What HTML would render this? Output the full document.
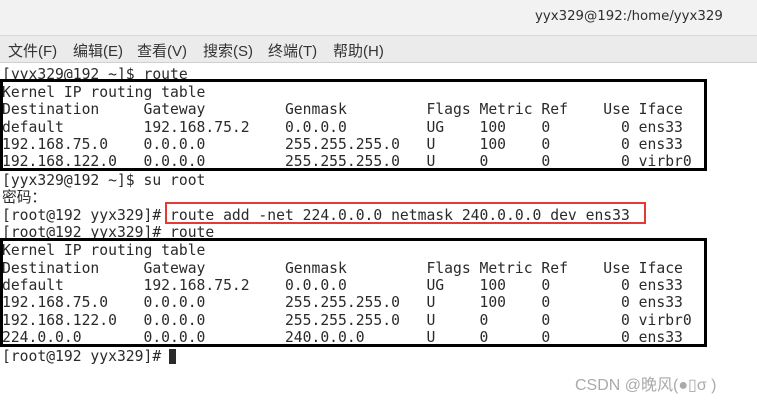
<!DOCTYPE html><html><head><meta charset="utf-8"><style>
body{margin:0;width:757px;height:402px;overflow:hidden;background:#fff;position:relative;font-family:"DejaVu Sans Mono","Liberation Mono","Noto Sans CJK SC",monospace;}
.title{position:absolute;left:0;top:0;width:757px;height:35px;background:#f2f2f2;border-bottom:1px solid #d8d8d8}
.title span{position:absolute;left:535px;top:9px;font:13.3px "DejaVu Sans","Liberation Sans",sans-serif;color:#2e2e2e}
.menu{position:absolute;left:0;top:36px;width:757px;height:26px;background:#ebebeb;border-bottom:1px solid #d0d0d0;font:15px "Liberation Sans","Noto Sans CJK SC",sans-serif;color:#333}
.menu span{position:absolute;top:4px}
.l{position:absolute;left:2px;font-size:14.7px;line-height:17px;white-space:pre;color:#2a2a2a}
.box{position:absolute;border:3px solid #000;box-sizing:border-box}
</style></head><body>
<div class="title"><span>yyx329@192:/home/yyx329</span></div>
<div class="menu"><span style="left:8px">文件(F)</span><span style="left:73px">编辑(E)</span><span style="left:137px">查看(V)</span><span style="left:203px">搜索(S)</span><span style="left:268px">终端(T)</span><span style="left:333px">帮助(H)</span></div>
<div class="l" style="top:66px">[yyx329@192 ~]$ route</div>
<div class="l" style="top:84px">Kernel IP routing table</div>
<div class="l" style="top:101px">Destination     Gateway         Genmask         Flags Metric Ref    Use Iface</div>
<div class="l" style="top:119px">default         192.168.75.2    0.0.0.0         UG    100    0        0 ens33</div>
<div class="l" style="top:136px">192.168.75.0    0.0.0.0         255.255.255.0   U     100    0        0 ens33</div>
<div class="l" style="top:153px">192.168.122.0   0.0.0.0         255.255.255.0   U     0      0        0 virbr0</div>
<div class="l" style="top:172px">[yyx329@192 ~]$ su root</div>
<div class="l" style="top:189px">密码：</div>
<div class="l" style="top:207px">[root@192 yyx329]# route add -net 224.0.0.0 netmask 240.0.0.0 dev ens33</div>
<div class="l" style="top:224px">[root@192 yyx329]# route</div>
<div class="l" style="top:242px">Kernel IP routing table</div>
<div class="l" style="top:260px">Destination     Gateway         Genmask         Flags Metric Ref    Use Iface</div>
<div class="l" style="top:277px">default         192.168.75.2    0.0.0.0         UG    100    0        0 ens33</div>
<div class="l" style="top:294px">192.168.75.0    0.0.0.0         255.255.255.0   U     100    0        0 ens33</div>
<div class="l" style="top:312px">192.168.122.0   0.0.0.0         255.255.255.0   U     0      0        0 virbr0</div>
<div class="l" style="top:329px">224.0.0.0       0.0.0.0         240.0.0.0       U     0      0        0 ens33</div>
<div class="l" style="top:348px">[root@192 yyx329]# </div>
<div style="position:absolute;left:169px;top:349px;width:7px;height:15px;background:#2a2a2a"></div>
<div class="box" style="left:0;top:79px;width:707px;height:92px"></div>
<div class="box" style="left:0;top:238px;width:707px;height:109px"></div>
<div class="box" style="left:165px;top:202px;width:481px;height:22px;border:2px solid #e53935"></div>
<div style="position:absolute;left:575px;top:371px;font:16px 'Liberation Sans','Noto Sans CJK SC',sans-serif;color:#aaa">CSDN @晚风(●▯σ )</div>
</body></html>
